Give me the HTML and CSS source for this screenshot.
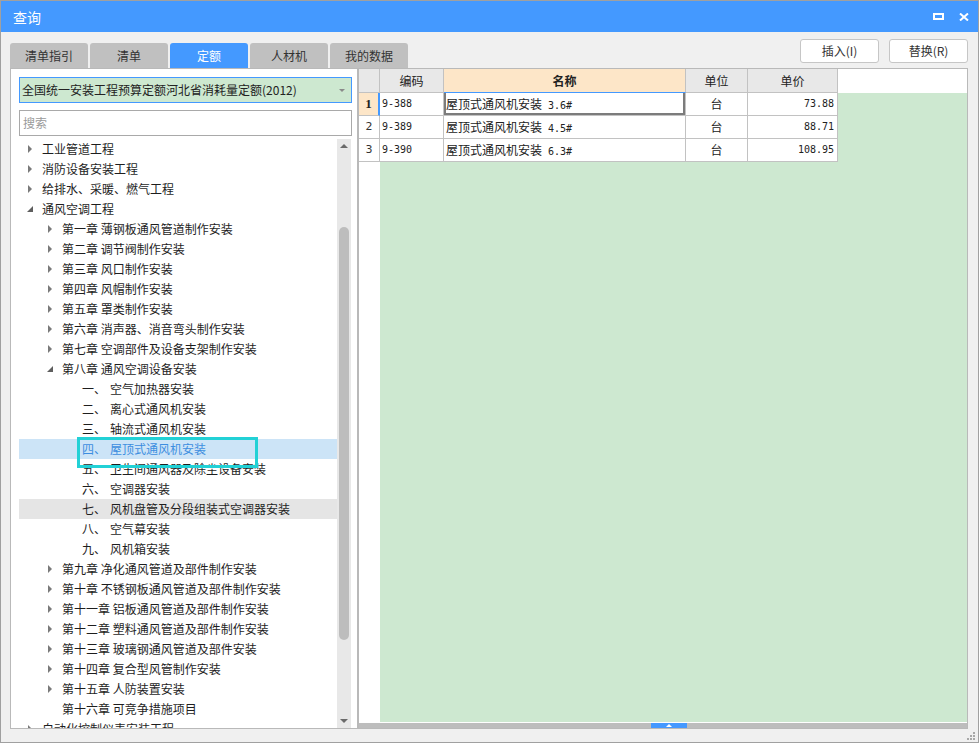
FILE: index.html
```html
<!DOCTYPE html>
<html lang="zh">
<head>
<meta charset="utf-8">
<title>查询</title>
<link rel="stylesheet" href="styles.css">
</head>
<body>
<div class="window">
  <div class="titlebar">
    <span class="title">查询</span>
    <div class="winctl">
      <svg width="11" height="7" viewBox="0 0 11 7"><rect x="1" y="1" width="9" height="5" fill="none" stroke="#fff" stroke-width="2"/></svg>
      <svg width="10" height="8" viewBox="0 0 10 8"><path d="M1 0.5 L9 7.5 M9 0.5 L1 7.5" stroke="#fff" stroke-width="2" fill="none"/></svg>
    </div>
  </div>
  <div class="content">
    <div class="toolbar">
      <div class="tabs">
        <div class="tab">清单指引</div>
        <div class="tab">清单</div>
        <div class="tab active">定额</div>
        <div class="tab">人材机</div>
        <div class="tab">我的数据</div>
      </div>
      <div class="actions">
        <button class="btn">插入(I)</button>
        <button class="btn">替换(R)</button>
      </div>
    </div>
    <div class="main">
      <div class="left">
        <div class="select"><span>全国统一安装工程预算定额河北省消耗量定额(2012)</span><i class="caret"></i></div>
        <div class="search"><span class="ph">搜索</span></div>
        <div class="treewrap">
          <div class="tree">
            <div class="row"><i class="tw ar"></i><span>工业管道工程</span></div>
            <div class="row"><i class="tw ar"></i><span>消防设备安装工程</span></div>
            <div class="row"><i class="tw ar"></i><span>给排水、采暖、燃气工程</span></div>
            <div class="row"><i class="tw ex"></i><span>通风空调工程</span></div>
            <div class="row l2"><i class="tw ar"></i><span>第一章 薄钢板通风管道制作安装</span></div>
            <div class="row l2"><i class="tw ar"></i><span>第二章 调节阀制作安装</span></div>
            <div class="row l2"><i class="tw ar"></i><span>第三章 风口制作安装</span></div>
            <div class="row l2"><i class="tw ar"></i><span>第四章 风帽制作安装</span></div>
            <div class="row l2"><i class="tw ar"></i><span>第五章 罩类制作安装</span></div>
            <div class="row l2"><i class="tw ar"></i><span>第六章 消声器、消音弯头制作安装</span></div>
            <div class="row l2"><i class="tw ar"></i><span>第七章 空调部件及设备支架制作安装</span></div>
            <div class="row l2"><i class="tw ex"></i><span>第八章 通风空调设备安装</span></div>
            <div class="row l3"><i class="tw"></i><span class="num">一、</span><span>空气加热器安装</span></div>
            <div class="row l3"><i class="tw"></i><span class="num">二、</span><span>离心式通风机安装</span></div>
            <div class="row l3"><i class="tw"></i><span class="num">三、</span><span>轴流式通风机安装</span></div>
            <div class="row l3 sel"><i class="tw"></i><span class="num">四、</span><span>屋顶式通风机安装</span></div>
            <div class="row l3"><i class="tw"></i><span class="num">五、</span><span>卫生间通风器及除尘设备安装</span></div>
            <div class="row l3"><i class="tw"></i><span class="num">六、</span><span>空调器安装</span></div>
            <div class="row l3 hov"><i class="tw"></i><span class="num">七、</span><span>风机盘管及分段组装式空调器安装</span></div>
            <div class="row l3"><i class="tw"></i><span class="num">八、</span><span>空气幕安装</span></div>
            <div class="row l3"><i class="tw"></i><span class="num">九、</span><span>风机箱安装</span></div>
            <div class="row l2"><i class="tw ar"></i><span>第九章 净化通风管道及部件制作安装</span></div>
            <div class="row l2"><i class="tw ar"></i><span>第十章 不锈钢板通风管道及部件制作安装</span></div>
            <div class="row l2"><i class="tw ar"></i><span>第十一章 铝板通风管道及部件制作安装</span></div>
            <div class="row l2"><i class="tw ar"></i><span>第十二章 塑料通风管道及部件制作安装</span></div>
            <div class="row l2"><i class="tw ar"></i><span>第十三章 玻璃钢通风管道及部件安装</span></div>
            <div class="row l2"><i class="tw ar"></i><span>第十四章 复合型风管制作安装</span></div>
            <div class="row l2"><i class="tw ar"></i><span>第十五章 人防装置安装</span></div>
            <div class="row l2"><i class="tw"></i><span>第十六章 可竞争措施项目</span></div>
            <div class="row"><i class="tw ar"></i><span>自动化控制仪表安装工程</span></div>
            <div class="annot"></div>
          </div>
          <div class="vscroll">
            <div class="sbtn"><i class="up"></i></div>
            <div class="thumb"></div>
            <div class="sbtn bottom"><i class="down"></i></div>
          </div>
        </div>
      </div>
      <div class="right">
        <div class="ghead">
          <div class="h w0"></div>
          <div class="h w1">编码</div>
          <div class="h w2 hl">名称</div>
          <div class="h w3">单位</div>
          <div class="h w4">单价</div>
        </div>
        <div class="gbody">
          <div class="rowhdrs">
            <div class="rh cur">1</div>
            <div class="rh">2</div>
            <div class="rh">3</div>
          </div>
          <div class="gdata">
            <div class="drow">
              <div class="d w1 mono">9-388</div>
              <div class="d w2 focus">屋顶式通风机安装<span class="mono"> 3.6#</span></div>
              <div class="d w3 ctr">台</div>
              <div class="d w4 mono rt">73.88</div>
            </div>
            <div class="drow">
              <div class="d w1 mono">9-389</div>
              <div class="d w2">屋顶式通风机安装<span class="mono"> 4.5#</span></div>
              <div class="d w3 ctr">台</div>
              <div class="d w4 mono rt">88.71</div>
            </div>
            <div class="drow">
              <div class="d w1 mono">9-390</div>
              <div class="d w2">屋顶式通风机安装<span class="mono"> 6.3#</span></div>
              <div class="d w3 ctr">台</div>
              <div class="d w4 mono rt">108.95</div>
            </div>
          </div>
        </div>
        <div class="hgap"></div>
        <div class="hscroll"><div class="hthumb"><i></i></div></div>
      </div>
    </div>
  </div>
  <div class="footer">
    <svg width="9" height="9" viewBox="0 0 9 9" fill="#a8a8a8">
      <rect x="6" y="0" width="2" height="2"/>
      <rect x="3" y="3" width="2" height="2"/><rect x="6" y="3" width="2" height="2"/>
      <rect x="0" y="6" width="2" height="2"/><rect x="3" y="6" width="2" height="2"/><rect x="6" y="6" width="2" height="2"/>
    </svg>
  </div>
</div>
</body>
</html>
```

FILE: styles.css
```css
* { box-sizing: border-box; margin: 0; padding: 0; }
html, body { width: 979px; height: 743px; overflow: hidden; }
body {
  background: #f0f0f0;
  font-family: "Noto Sans CJK SC", "Noto Sans", sans-serif;
  font-size: 12px;
  color: #222;
}
.window {
  width: 979px; height: 743px;
  border: 1px solid #a0a0a0;
  display: flex; flex-direction: column;
  background: #f0f0f0;
}
.titlebar {
  height: 31px; flex: none;
  background: #4499ff;
  display: flex; align-items: center; justify-content: space-between;
  padding: 0 9px 0 12px;
  color: #fff;
}
.title { font-size: 14px; line-height: 20px; }
.winctl { display: flex; align-items: center; gap: 15px; }
.winctl svg { display: block; }

.content { flex: 1; display: flex; flex-direction: column; padding: 0 10px 0 9px; }
.toolbar { height: 36px; flex: none; display: flex; justify-content: space-between; align-items: flex-start; }
.tabs { display: flex; gap: 2px; margin-top: 11px; }
.tab {
  width: 78px; height: 25px;
  background: #c0c0c0;
  border-radius: 3px 3px 0 0;
  text-align: center; line-height: 25px;
  font-size: 12px; color: #333;
}
.tab.active { background: #4499ff; color: #fff; }
.actions { display: flex; gap: 10px; margin-top: 7px; }
.btn {
  width: 79px; height: 24px;
  background: #fff;
  border: 1px solid #c6c6c6; border-radius: 3px;
  font: 12px/22px "Noto Sans CJK SC", sans-serif;
  color: #333;
}

.main { height: 661px; flex: none; display: flex; }
.left {
  width: 348px; flex: none;
  background: #fff;
  border: 1px solid #b9b9b9;
  display: flex; flex-direction: column;
  padding: 8px 5px 0 8px;
}
.select {
  height: 26px; flex: none;
  border: 1px solid #4499ff;
  background: #cde8d0;
  display: flex; align-items: center; justify-content: space-between;
  padding: 0 6px 0 2px;
  line-height: 24px;
  white-space: nowrap;
}
.caret {
  width: 0; height: 0;
  border-left: 3px solid transparent; border-right: 3px solid transparent;
  border-top: 3px solid #8a8a8a;
}
.search {
  height: 26px; flex: none; margin-top: 7px;
  border: 1px solid #a9a9a9;
  background: #fff;
  padding-left: 3px; line-height: 24px;
}
.ph { color: #9a9a9a; }

.treewrap { flex: 1; min-height: 0; margin-top: 3px; display: flex; }
.tree { flex: 1; position: relative; overflow: hidden; }
.row {
  height: 20px; display: flex; align-items: center;
  white-space: nowrap; line-height: 20px; color: #1e1e1e;
}
.row.l2 { padding-left: 20px; }
.row.l3 { padding-left: 40px; }
.row.sel { background: #cce4f7; color: #3d8ee0; }
.row.hov { background: #e5e5e5; }
.tw { width: 23px; height: 20px; flex: none; display: flex; align-items: center; }
.tw.ar::before {
  content: ""; margin-left: 9px;
  border-top: 4px solid transparent; border-bottom: 4px solid transparent;
  border-left: 4px solid #7a7a7a;
}
.tw.ex::before {
  content: ""; margin-left: 8px;
  border-top: 6px solid transparent;
  border-right: 6px solid #5e5e5e;
}
.num { width: 28px; flex: none; }
.annot {
  position: absolute; left: 58px; top: 298px;
  width: 181px; height: 31px;
  border: 3px solid #22d1d6;
}

.vscroll {
  width: 14px; flex: none; margin-right: 1px;
  background: #e8e8e8;
  display: flex; flex-direction: column; align-items: center;
}
.sbtn { height: 14px; width: 14px; flex: none; display: flex; align-items: center; justify-content: center; }
.sbtn.bottom { margin-top: auto; }
.up { width: 0; height: 0; border-left: 4px solid transparent; border-right: 4px solid transparent; border-bottom: 4px solid #6a6a6a; }
.down { width: 0; height: 0; border-left: 4px solid transparent; border-right: 4px solid transparent; border-top: 4px solid #6a6a6a; }
.thumb { width: 10px; height: 413px; margin-top: 74px; border-radius: 5px; background: #bdbdbd; flex: none; }

.right {
  flex: 1; display: flex; flex-direction: column;
  background: #fff;
  border: 1px solid #b9b9b9;
}
.ghead { height: 24px; flex: none; display: flex; }
.h {
  height: 24px;
  background: #e8e8e8;
  border-right: 1px solid #c2c2c2; border-bottom: 1px solid #c2c2c2;
  text-align: center; line-height: 23px; color: #222;
}
.h.hl { background: #fde6c8; font-weight: bold; border-bottom-color: #4499ff; }
.w0 { width: 21px; flex: none; }
.w1 { width: 64px; flex: none; }
.w2 { width: 242px; flex: none; }
.w3 { width: 62px; flex: none; }
.w4 { width: 90px; flex: none; }
.gbody { flex: 1; min-height: 0; display: flex; }
.rowhdrs { width: 21px; flex: none; background: #fff; }
.rh {
  height: 23px;
  border-right: 1px solid #c2c2c2; border-bottom: 1px solid #c2c2c2;
  text-align: center; line-height: 22px;
  font-family: "DejaVu Sans", sans-serif; font-size: 11px; color: #333;
}
.rh.cur {
  background: #fde6c8; border-right: 2px solid #4499ff;
  font-family: "Liberation Serif", serif; font-weight: bold; font-size: 13px; color: #222;
}
.gdata { flex: 1; background: #cde8d0; }
.drow { display: flex; height: 23px; }
.d {
  height: 23px; background: #fff;
  border-right: 1px solid #c2c2c2; border-bottom: 1px solid #c2c2c2;
  line-height: 22px; white-space: nowrap; overflow: hidden;
  padding: 0 2px;
}
.mono { font-family: "DejaVu Sans Mono", "Liberation Mono", monospace; font-size: 10px; }
.ctr { text-align: center; }
.rt { text-align: right; padding-right: 3px; }
.focus { box-shadow: inset 2px 0 0 #7c7c7c, inset -2px 0 0 #7c7c7c, inset 0 -2px 0 #7c7c7c; }
.hgap { height: 1px; flex: none; background: #fff; }
.hscroll { height: 5px; flex: none; background: #bdbdbd; display: flex; }
.hthumb {
  width: 36px; height: 5px; margin-left: 292px;
  background: #4499ff;
  display: flex; align-items: center; justify-content: center;
}
.hthumb i { width: 0; height: 0; border-left: 3px solid transparent; border-right: 3px solid transparent; border-bottom: 3px solid #fff; }

.footer { height: 13px; flex: none; display: flex; justify-content: flex-end; align-items: flex-end; padding: 0 2px 1px 0; }
.footer svg { display: block; }
```
